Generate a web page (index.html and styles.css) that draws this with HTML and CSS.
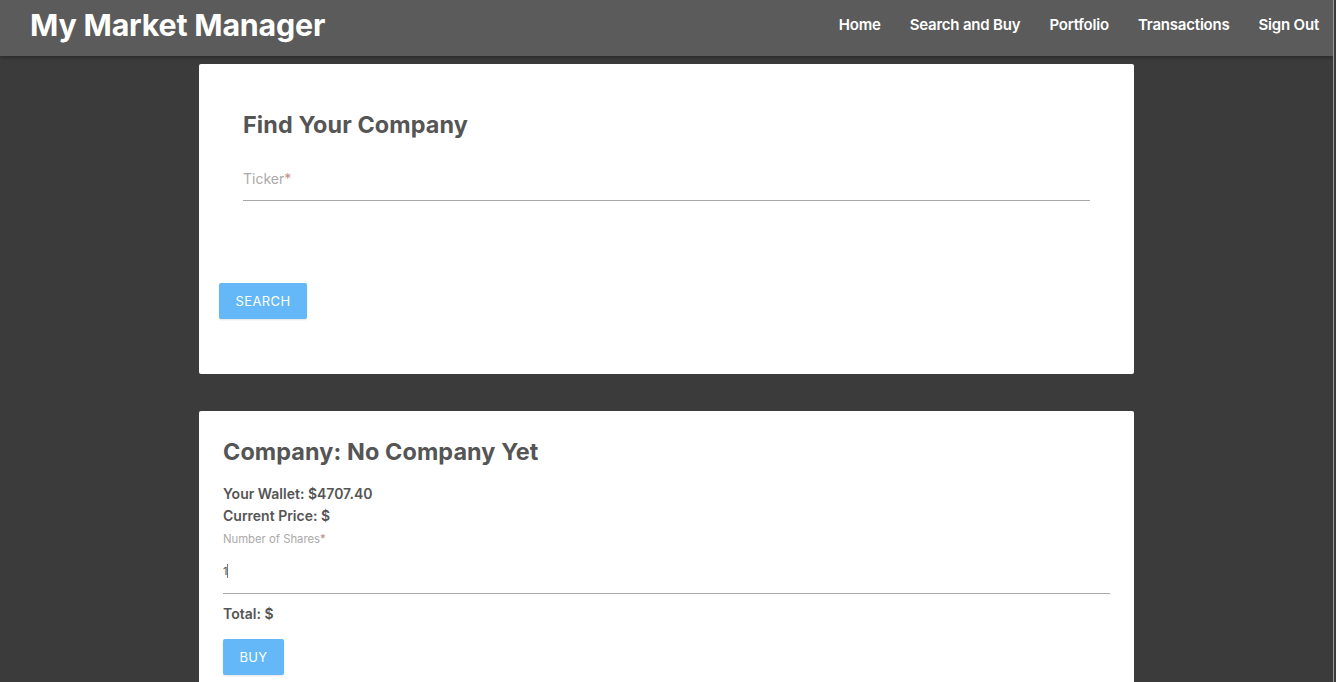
FILE: index.html
```html
<!DOCTYPE html>
<html>
<head>
<meta charset="utf-8">
<link rel="stylesheet" href="styles.css">
</head>
<body>
<div class="page">
<header class="navbar">
  <div class="brand">My Market Manager</div>
  <nav class="links">
    <a href="#">Home</a>
    <a href="#">Search and Buy</a>
    <a href="#">Portfolio</a>
    <a href="#">Transactions</a>
    <a href="#">Sign Out</a>
  </nav>
</header>
<main class="content">
  <section class="card search-card">
    <form class="search-form">
      <h2 class="card-title">Find Your Company</h2>
      <div class="field">
        <label class="field-label">Ticker<span class="req">*</span></label>
        <div class="field-line"></div>
      </div>
    </form>
    <button class="btn btn-search">SEARCH</button>
  </section>
  <section class="card buy-card">
    <h2 class="card-title">Company: No Company Yet</h2>
    <p class="info">Your Wallet: $4707.40</p>
    <p class="info">Current Price: $</p>
    <label class="small-label">Number of Shares<span class="req">*</span></label>
    <div class="shares-input"><span class="value">1</span><span class="caret"></span></div>
    <p class="info total">Total: $</p>
    <button class="btn btn-buy">BUY</button>
  </section>
</main>
</div>
<div class="edge"></div>
</body>
</html>
```
FILE: styles.css
```css
* { box-sizing: border-box; }
html, body { margin: 0; padding: 0; }
body {
  background: #3b3b3b;
  font-family: Inter, "Noto Sans", sans-serif;
  color: #555;
  height: 682px;
  overflow: hidden;
  display: flex;
}
.page {
  flex: 1;
  min-width: 0;
}
.edge {
  width: 3px;
  background: #3b3b3b;
  border-left: 1px solid #9a9a9a;
}
.navbar {
  height: 56px;
  background: #5b5b5b;
  display: flex;
  align-items: center;
  justify-content: space-between;
  padding: 0 14px 0 30px;
  box-shadow: 0 2px 3px rgba(0,0,0,0.25);
}
.brand {
  color: #fff;
  font-size: 30.4px;
  font-weight: 700;
  letter-spacing: -0.2px;
  margin-top: -7px;
}
.links {
  display: flex;
  gap: 29px;
  margin-top: -7px;
}
.links a {
  color: #fff;
  text-decoration: none;
  font-size: 15px;
  font-weight: 600;
  letter-spacing: -0.2px;
}
.content {
  width: 935px;
  margin: 8px auto 0;
  display: flex;
  flex-direction: column;
  gap: 37px;
}
.card {
  background: #fff;
  border-radius: 2px;
}
.search-card {
  height: 310px;
  padding: 22px 20px 0 20px;
}
.search-form {
  padding: 24px 24px 0 24px;
}
.card-title {
  margin: 0;
  font-size: 23.4px;
  font-weight: 700;
  color: #555;
  letter-spacing: 0.1px;
}
.field {
  margin-top: 31px;
}
.field-label {
  display: block;
  font-size: 14px;
  color: #aaa;
  height: 30px;
}
.req { color: #c5888a; }
.field-line {
  border-bottom: 1px solid #a8a8a8;
}
.btn {
  border: none;
  border-radius: 2px;
  background: #64b8f8;
  color: #fff;
  font-family: Inter, "Noto Sans", sans-serif;
  font-size: 13px;
  height: 36px;
  padding: 0 16px;
  letter-spacing: 0.4px;
  box-shadow: 0 1px 2px rgba(0,0,0,0.12);
}
.btn-search {
  margin-top: 82px;
  width: 88px;
}
.buy-card {
  height: 300px;
  padding: 26px 24px 0 24px;
}
.info {
  margin: 0;
  font-size: 14px;
  font-weight: 600;
  line-height: 22px;
  color: #555;
}
.buy-card .card-title { margin-bottom: 17px; }
.small-label {
  display: block;
  font-size: 11.3px;
  color: #aaa;
  margin-top: 5px;
}
.shares-input {
  height: 48px;
  border-bottom: 1px solid #a8a8a8;
  display: flex;
  align-items: center;
  padding-top: 3px;
  font-size: 14px;
  color: #555;
}
.caret {
  display: inline-block;
  width: 1px;
  height: 14px;
  background: #777;
}
.value { font-size: 11px; }
.total { margin-top: 9px; }
.btn-buy {
  margin-top: 14px;
  width: 61px;
}
```
